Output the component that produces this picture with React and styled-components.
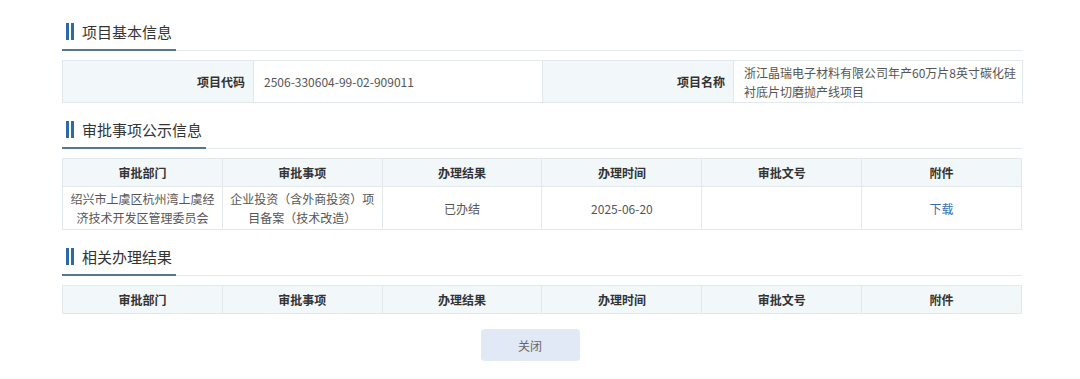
import React from 'react';
import styled, { createGlobalStyle } from 'styled-components';

const GlobalStyle = createGlobalStyle`
  html, body {
    margin: 0;
    padding: 0;
    background: #ffffff;
  }
  body {
    font-family: "Noto Sans CJK SC", "Liberation Sans", sans-serif;
    color: #333;
  }
`;

const Page = styled.div`
  width: 960px;
  margin: 0 auto 0 62px;
  padding-top: 13px;
`;

const SectionHead = styled.div`
  height: 37px;
  border-bottom: 1px solid #e6e9ec;
  display: flex;
  align-items: stretch;
  margin-top: ${p => (p.$first ? '0' : '8px')};
`;

const HeadTitle = styled.div`
  display: flex;
  align-items: center;
  padding: 0 4px;
  border-bottom: 2px solid #56758e;
  margin-bottom: -1px;
  font-size: 15px;
  color: #333;
  gap: 8px;
`;

const Bars = styled.span`
  width: 8px;
  height: 17px;
  background: linear-gradient(
    to right,
    #2b69a8 0,
    #2b69a8 3px,
    transparent 3px,
    transparent 5px,
    #2b69a8 5px
  );
`;

const Table = styled.table`
  width: 100%;
  margin-top: 9px;
  border-collapse: collapse;
  table-layout: fixed;
  font-size: 12px;
  border: 1px solid #e3e8ec;
`;

const Th = styled.th`
  height: 27px;
  background: #f2f7f9;
  border: 1px solid #e3e8ec;
  font-weight: bold;
  color: #333;
  text-align: center;
  padding: 0;
`;

const Td = styled.td`
  height: 42px;
  border: 1px solid #e3e8ec;
  color: #555;
  text-align: center;
  line-height: 19px;
  padding: 0 6px;
`;

const Label = styled.td`
  height: 41px;
  background: #f2f7f9;
  border: 1px solid #e3e8ec;
  font-weight: bold;
  color: #333;
  text-align: right;
  padding: 0 8px;
`;

const Value = styled.td`
  border: 1px solid #e3e8ec;
  color: #555;
  text-align: left;
  line-height: 19px;
  padding: 0 2px 0 10px;
`;

const Link = styled.a`
  color: #3a6fb0;
  text-decoration: none;
`;

const Footer = styled.div`
  display: flex;
  justify-content: center;
  padding: 15px 24px 0 0;
`;

const CloseButton = styled.button`
  width: 99px;
  height: 32px;
  border: none;
  border-radius: 4px;
  background: #e1e9f7;
  color: #666;
  font-family: inherit;
  font-size: 12px;
  cursor: pointer;
`;

const columns = ['审批部门', '审批事项', '办理结果', '办理时间', '审批文号', '附件'];

function Heading({ title, first }) {
  return (
    <SectionHead $first={first}>
      <HeadTitle>
        <Bars />
        {title}
      </HeadTitle>
    </SectionHead>
  );
}

function HeaderRow() {
  return (
    <thead>
      <tr>
        {columns.map(c => (
          <Th key={c}>{c}</Th>
        ))}
      </tr>
    </thead>
  );
}

export default function App() {
  return (
    <>
      <GlobalStyle />
      <Page>
        <Heading title="项目基本信息" first />
        <Table>
          <colgroup>
            <col style={{ width: '191px' }} />
            <col style={{ width: '289px' }} />
            <col style={{ width: '191px' }} />
            <col style={{ width: '289px' }} />
          </colgroup>
          <tbody>
            <tr>
              <Label>项目代码</Label>
              <Value>2506-330604-99-02-909011</Value>
              <Label>项目名称</Label>
              <Value>浙江晶瑞电子材料有限公司年产60万片8英寸碳化硅衬底片切磨抛产线项目</Value>
            </tr>
          </tbody>
        </Table>

        <Heading title="审批事项公示信息" />
        <Table>
          <HeaderRow />
          <tbody>
            <tr>
              <Td>绍兴市上虞区杭州湾上虞经济技术开发区管理委员会</Td>
              <Td>企业投资（含外商投资）项目备案（技术改造）</Td>
              <Td>已办结</Td>
              <Td>2025-06-20</Td>
              <Td></Td>
              <Td>
                <Link href="#">下载</Link>
              </Td>
            </tr>
          </tbody>
        </Table>

        <Heading title="相关办理结果" />
        <Table>
          <HeaderRow />
        </Table>

        <Footer>
          <CloseButton>关闭</CloseButton>
        </Footer>
      </Page>
    </>
  );
}
